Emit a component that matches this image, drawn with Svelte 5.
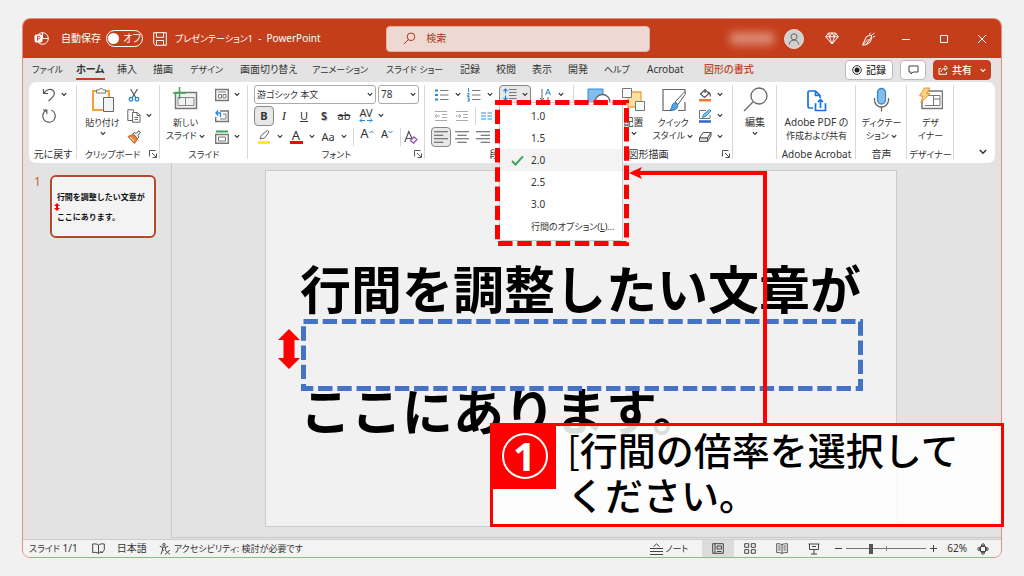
<script>
  const tabs = ['ファイル', 'ホーム', '挿入', '描画', 'デザイン', '画面切り替え', 'アニメーション', 'スライド ショー', '記録', '校閲', '表示', '開発', 'ヘルプ', 'Acrobat', '図形の書式'];
  const kanaTabs = ['ファイル', 'デザイン', 'アニメーション', 'スライド ショー', 'ヘルプ'];
  const spacings = ['1.0', '1.5', '2.0', '2.5', '3.0'];
  let active = $state('ホーム');
  let spacing = $state('2.0');
  let zoom = $state(30);
</script>

{#snippet chev()}
  <svg class="chev" width="6" height="5" viewBox="0 0 6 5"><path d="M0.8 1.2 3 3.4 5.2 1.2" fill="none" stroke="currentColor" stroke-width="1.2" /></svg>
{/snippet}

{#snippet launcher()}
  <button class="launcher" aria-label="詳細">
    <svg width="8" height="8" viewBox="0 0 8 8" fill="none" stroke="#555"><path d="M.5 6.500v-6h6M3 3l4 4M7.500 3.500v4h-4" /></svg>
  </button>
{/snippet}

{#snippet lines(rows)}
  <svg width="14" height="14" viewBox="0 0 12 12" stroke="#555"><path d={rows} /></svg>
{/snippet}

<div class="page">
  <div class="window">
    <header class="title">
      <div class="left">
        <svg width="15" height="15" viewBox="0 0 15 15" fill="none" stroke="#fff"><circle cx="8.500" cy="7.500" r="5.800" /><path d="M8.500 1.700v5.800h5.800" /><rect x="1" y="4" width="7" height="7" rx="1" fill="#fff" /><path d="M3.500 9.700V5.400h1.300a1.200 1.200 0 0 1 0 2.500H3.500" stroke="#c43e1c" /></svg>
        <span class="autosave" id="autosave">自動保存</span>
        <button class="toggle" role="switch" aria-checked="false" aria-labelledby="autosave"><i></i>オフ</button>
        <svg class="save" width="14" height="14" viewBox="0 0 14 14" fill="none" stroke="#fff"><path d="M.7 .7h12.600v12.600H2.500L.7 11.500zM3.500.7v4.600h7V.7M3.500 13V8.500h7V13" /></svg>
        <span><span class="kana">プレゼンテーション1</span>&nbsp; -&nbsp; PowerPoint</span>
      </div>
      <label class="search">
        <svg width="13" height="13" viewBox="0 0 13 13" fill="none" stroke="#a8381c"><circle cx="8" cy="4.800" r="3.800" /><path d="M5.300 7.600.8 12.200" /></svg>
        <input type="search" placeholder="検索" aria-label="検索" />
      </label>
      <div class="right">
        <span class="account"></span>
        <svg class="avatar" width="20" height="20" viewBox="0 0 20 20" fill="none" stroke="#666"><circle cx="10" cy="10" r="9.500" fill="#d2d0ce" stroke="#e6dcd9" /><circle cx="10" cy="7.800" r="3" /><path d="M5.200 15.500c.4-3 2.200-4.300 4.800-4.300s4.400 1.300 4.800 4.300" /></svg>
        <svg width="14" height="13" viewBox="0 0 14 13" fill="none" stroke="#fff"><path d="M3.500 1h7L13.300 4.800 7 12 .7 4.800zM.7 4.800h12.600M4.500 4.800 7 12l2.500-7.200L7 1 4.500 4.800 3.500 1M9.500 4.800l1-3.800" /></svg>
        <svg class="pen" width="15" height="14" viewBox="0 0 15 14" fill="none" stroke="#fff"><path d="M1.500 13 5.500 4.500l5-1.500v2L5 12.800zM5 12.800l4-2.500 2-5M1.500 13l6-6M8.500 2.500l.8-1.800M11.300 3 13.300.8M12 5l2-.7" /></svg>
        <button aria-label="最小化"><svg width="10" height="10" viewBox="0 0 10 10" stroke="#fff"><path d="M1 5.500h8" /></svg></button>
        <button aria-label="最大化"><svg width="10" height="10" viewBox="0 0 10 10" fill="none" stroke="#fff"><path d="M1.500 1.500h7v7h-7z" /></svg></button>
        <button aria-label="閉じる"><svg width="10" height="10" viewBox="0 0 10 10" stroke="#fff"><path d="m1 1 8 8M9 1 1 9" /></svg></button>
      </div>
    </header>

    <div class="tabbar">
      <nav>
        {#each tabs as tab}
          <button class="tab" class:kana={kanaTabs.includes(tab)} class:active={active === tab} class:context={tab === '図形の書式'} onclick={() => (active = tab)}>{tab}</button>
        {/each}
      </nav>
      <button class="pill rec"><svg width="10" height="10" viewBox="0 0 10 10"><circle cx="5" cy="5" r="4.300" fill="none" stroke="#333" /><circle cx="5" cy="5" r="2.500" fill="#222" /></svg>記録</button>
      <button class="pill note" aria-label="コメント"><svg width="11" height="10" viewBox="0 0 11 10" fill="none" stroke="#444"><path d="M1 1h9v6H5L3 9V7H1z" /></svg></button>
      <button class="pill share"><svg width="10" height="10" viewBox="0 0 10 10" fill="none" stroke="#fff"><path d="M3 3.500H1v5.800h7.500V7M3 7c.3-2.500 1.700-3.500 4-3.500V5.500L9.500 3 7 .8v1.500" /></svg>共有{@render chev()}</button>
    </div>

    <div class="ribbon">
      <section class="undo">
        <div class="body">
          <div class="stack">
            <div><svg width="14" height="14" viewBox="0 0 14 14" fill="none" stroke="#555" stroke-width="1.200"><path d="M1.500 1v4.500H6M1.700 5.300C4 2 8 .2 10.700 2.200c2.600 2 2 5-.4 7.200L6.500 13" /></svg>{@render chev()}</div>
            <div><svg width="14" height="14" viewBox="0 0 14 14" fill="none" stroke="#555" stroke-width="1.200"><path d="M1 1h3.800v4M4.500 1.300C2 2.500.8 4.500.8 7a6.200 6.200 0 1 0 8.500-5.700" /></svg></div>
          </div>
        </div>
        <footer>元に戻す</footer>
      </section>

      <section class="clip">
        <div class="body">
          <button class="big">
            <svg width="24" height="25" viewBox="0 0 24 25" fill="none"><path d="M2 4h16v19H2z" fill="#fbfbfb" stroke="#f0a23a" stroke-width="2" /><path d="M5.500 6V3H8a2.200 2.200 0 0 1 4.200 0h2.300v3z" fill="#fff" stroke="#777" /><path d="M12.500 10.500h10v14h-10z" fill="#f4f4f4" stroke="#666" /></svg>
            <span class="kana">貼り付け</span>{@render chev()}
          </button>
          <div class="stack">
            <div><svg width="14" height="14" viewBox="0 0 14 14" fill="none"><path d="M3.500 1 9 10M10.500 1 5 10" stroke="#555" stroke-width="1.200" /><circle cx="4" cy="11.300" r="1.800" stroke="#2b88d8" stroke-width="1.300" /><circle cx="10" cy="11.300" r="1.800" stroke="#2b88d8" stroke-width="1.300" /></svg></div>
            <div><svg width="14" height="14" viewBox="0 0 14 14" fill="none" stroke="#666"><path d="M5 11.500H.8V.8h5.700v2M5.500 3.500h5l2.500 2.700v7H5.500zM10 3.500v3h3M7.500 8.500h3.500M7.500 10.500h3.500" /></svg>{@render chev()}</div>
            <div><svg width="14" height="14" viewBox="0 0 14 14"><path d="M1 6.500 6 4.500l4.500 4.500-3 4.500z" fill="#f0843a" stroke="#c8641c" /><path d="m6 3.500 1.500-1 1.500 1L12 .8l1.300 1.400L11 5.500l1 1.500-1.500 1.500z" fill="#fff" stroke="#555" /><path d="m3 7 4 4" stroke="#fff" /></svg></div>
          </div>
        </div>
        <footer><span class="kana">クリップボード</span>{@render launcher()}</footer>
      </section>

      <section class="slides">
        <div class="body">
          <button class="big">
            <svg width="25" height="25" viewBox="0 0 25 25" fill="none"><path d="M2.500 5.500h21v16h-21z" fill="#f2f2f2" stroke="#777" stroke-width="1.500" /><path d="M5 10.500h16M5 18.500h16M5 10.500v8M21 10.500v8M12.500 10.500v8" stroke="#888" /><path d="M6.500 0v12M0 6h13" stroke="#3aa655" stroke-width="1.500" /></svg>
            <span class="kana">新しい<br />スライド {@render chev()}</span>
          </button>
          <div class="stack">
            <div><svg width="14" height="14" viewBox="0 0 14 14" fill="none" stroke="#777"><path d="M.7 1.500h12.600v11H.7z" stroke-width="1.400" /><path d="M3 4h8M3.500 6.500h3v3.500h-3zM8 6.500h3v3.500H8z" /></svg>{@render chev()}</div>
            <div><svg width="14" height="14" viewBox="0 0 14 14" fill="none" stroke="#777"><path d="M5 2h8.300v10.500H.7V8" stroke-width="1.400" /><path d="M5 10h6V5H8" /><path d="M1 4h4.500v4M3.200 1.500.8 4l2.400 2.500" stroke="#2b88d8" stroke-width="1.300" /></svg></div>
            <div><svg width="14" height="14" viewBox="0 0 14 14" fill="none" stroke="#777"><path d="M1 1.500h12" stroke="#3aa655" stroke-width="2" /><path d="M.7 4.500h12.600v8.800H.7z" stroke-width="1.400" /><path d="M3.500 7h7v4h-7z" /></svg>{@render chev()}</div>
          </div>
        </div>
        <footer><span class="kana">スライド</span></footer>
      </section>

      <section class="font">
        <div class="body rows">
          <div class="row combos">
            <span class="combo"><select class="kana" aria-label="フォント"><option>游ゴシック 本文</option></select>{@render chev()}</span>
            <span class="combo size"><select aria-label="フォント サイズ"><option>78</option></select>{@render chev()}</span>
          </div>
          <div class="row">
            <button class="cell on"><b>B</b></button>
            <button class="cell"><i class="serif">I</i></button>
            <button class="cell"><u>U</u></button>
            <button class="cell"><b class="shadow">S</b></button>
            <button class="cell"><s>ab</s></button>
            <button class="cell av">AV<svg width="14" height="5" viewBox="0 0 14 5" fill="none" stroke="#2b88d8"><path d="M.8 2.500h5.200M8 2.500h5.200M3 .5l-2 2 2 2M11 .5l2 2-2 2" /></svg></button>
            {@render chev()}
          </div>
          <div class="row third">
            <button class="cell" aria-label="蛍光ペン"><svg width="14" height="16" viewBox="0 0 14 16"><path d="M1 13.500h12" stroke="#ffef00" stroke-width="3" /><path d="m3 10 1.500-4 6-4.500 1.500 1.500-4.500 6z" fill="#fff" stroke="#666" /></svg></button>{@render chev()}
            <button class="cell color">A</button>{@render chev()}
            <button class="cell">Aa</button>{@render chev()}
            <hr />
            <button class="cell grow">A<svg width="5" height="4" viewBox="0 0 5 4" fill="none" stroke="#2b88d8"><path d="m.5 3 2-2 2 2" /></svg></button>
            <button class="cell grow small">A<svg width="5" height="4" viewBox="0 0 5 4" fill="none" stroke="#2b88d8"><path d="m.5 1 2 2 2-2" /></svg></button>
            <hr />
            <button class="clear" aria-label="書式のクリア"><svg width="14" height="14" viewBox="0 0 14 14" fill="none"><path d="m.8 12 4-10.500L9 11M2.200 8.500h5" stroke="#555" stroke-width="1.200" /><path d="m6.500 10.500 3.500-3.500 3 2.500-3.500 3.700z" fill="#fff" stroke="#a04fc0" stroke-width="1.300" /></svg></button>
          </div>
        </div>
        <footer><span class="kana">フォント</span>{@render launcher()}</footer>
      </section>

      <section class="para">
        <div class="body rows">
          <div class="row first">
            <svg width="14" height="14" viewBox="0 0 14 14"><path d="M0 2.500h3M0 7h3M0 11.500h3" stroke="#2b88d8" stroke-width="2" /><path d="M5 2.500h8.500M5 7h8.500M5 11.500h8.500" stroke="#777" /></svg>{@render chev()}
            <svg width="14" height="14" viewBox="0 0 14 14" fill="none"><path d="M1.500 0v4M.5 5.500h1.500v1.500H.7v1.500h1.800M.5 10h1.700v3.300H.5M.8 11.600h1.400" stroke="#2b88d8" /><path d="M5 2.500h8.500M5 7h8.500M5 11.500h8.500" stroke="#777" /></svg>{@render chev()}
            <div class="spacing">
              <button class="on" aria-label="行間"><svg width="14" height="13" viewBox="0 0 14 13" fill="none"><path d="M2.500 1v4.500M.5 3l2-2 2 2M2.500 12V7.500M.5 10l2 2 2-2" stroke="#2b88d8" stroke-width="1.200" /><path d="M6 1.500h7.500M6 4.500h7.500M6 7.500h7.500M6 10.500h7.500" stroke="#777" /></svg>{@render chev()}</button>
              <div class="menu">
                {#each spacings as value}
                  <button class:picked={spacing === value} onclick={() => (spacing = value)}>
                    {#if spacing === value}<svg width="13" height="11" viewBox="0 0 13 11" fill="none"><path d="m1 6 3.500 3.500L12 1.300" stroke="#3aa655" stroke-width="2" /></svg>{:else}<i></i>{/if}<span>{value}</span>
                  </button>
                {/each}
                <button><i></i><span class="kana">行間のオプション(<u>L</u>)...</span></button>
              </div>
            </div>
            <svg class="dir" width="13" height="14" viewBox="0 0 13 14" fill="none"><path d="M2 1v11M0 10l2 2.500L4 10" stroke="#666" /><path d="m5.500 7 2.500-6 2.500 6M6.300 5h3.500" stroke="#2b88d8" /><path d="M8 9v4" stroke="#666" /></svg>{@render chev()}
          </div>
          <div class="row indent">
            <svg width="12" height="12" viewBox="0 0 12 12" fill="none" stroke="#aaa"><path d="M0 1.500h12M7 4.500h5M7 7.500h5M0 10.500h12M0 6h5M2 4.200 0 6l2 1.800" /></svg>
            <svg width="12" height="12" viewBox="0 0 12 12" fill="none" stroke="#aaa"><path d="M0 1.500h12M7 4.500h5M7 7.500h5M0 10.500h12M0 6h5M3 4.200 5 6 3 7.800" /></svg>
            <hr />
            <svg width="11" height="10" viewBox="0 0 11 10" stroke="#2b88d8"><path d="M0 2h5M0 5h5M0 8h5M6.500 2h4.500M6.500 5h4.500M6.500 8h4.500" /></svg>{@render chev()}
          </div>
          <div class="row align">
            <button class="cell on" aria-label="左揃え">{@render lines('M0 1.500h12M0 4.500h8M0 7.500h12M0 10.500h8')}</button>
            <button class="cell" aria-label="中央揃え">{@render lines('M0 1.500h12M2 4.500h8M0 7.500h12M2 10.500h8')}</button>
            <button class="cell" aria-label="右揃え">{@render lines('M0 1.500h12M4 4.500h8M0 7.500h12M4 10.500h8')}</button>
            <button class="cell" aria-label="両端揃え">{@render lines('M0 1.500h12M0 4.500h12M0 7.500h12M0 10.500h12')}</button>
          </div>
        </div>
        <footer class="under">段落</footer>
      </section>

      <section class="draw">
        <div class="body">
          <button class="big" aria-label="図形"><svg width="25" height="25" viewBox="0 0 25 25"><path d="M1 2h15v14H1z" fill="#83beec" stroke="#2b88d8" /><circle cx="15.500" cy="15" r="7.500" fill="#fff" stroke="#666" stroke-width="1.300" /></svg></button>
          <button class="big"><svg width="25" height="25" viewBox="0 0 25 25"><path d="M7 5h13v15H7z" fill="#fbe0a0" stroke="#eba43c" stroke-width="1.300" /><path d="M1.500 1.500h9v9h-9zM14.500 14.500h9v9h-9z" fill="#fafafa" stroke="#777" /></svg><span>配置</span>{@render chev()}</button>
          <button class="big quick"><svg width="25" height="25" viewBox="0 0 25 25" fill="none"><path d="M24 6V2.500H2v21h9M24 15v8.500h-7" stroke="#666" stroke-width="1.200" /><path d="m14 15 8-8.500c2-2 3.500-1.500 2 1l-7 10z" fill="#fff" stroke="#555" /><path d="M9 23c2-1 1.500-3 2.500-5.500 1-2.500 5-2 5.300 1C17 22 13 24 9 23z" fill="#5aa5e0" stroke="#2170b8" /></svg><span class="kana">クイック<br />スタイル {@render chev()}</span></button>
          <div class="stack">
            <div><svg width="14" height="14" viewBox="0 0 14 14" fill="none"><path d="M1 12.300h12" stroke="#ed7d31" stroke-width="2.500" /><path d="m2.500 6 4.500-4.500 4 4-4.500 4zM7 1.500V5M10.500 4c1.500.5 2 2 1.800 4.500" stroke="#555" stroke-width="1.200" /></svg>{@render chev()}</div>
            <div><svg width="14" height="14" viewBox="0 0 14 14" fill="none"><path d="M1 12.500h12" stroke="#2f66c5" stroke-width="2.500" /><path d="M8 1.500H1.500v8H12V6" stroke="#777" /><path d="m4.500 8.500 1-3 6-5 1.500 1.500-5.500 5.500z" fill="#83beec" stroke="#2b88d8" /></svg>{@render chev()}</div>
            <div><svg width="14" height="14" viewBox="0 0 14 14" fill="#ddd" stroke="#555"><path d="M1.500 8 5 2.500h8L9.500 8z" fill="#fff" /><path d="M1.500 8h8v3.500h-8zM9.500 8 13 2.500V6l-3.500 5.500z" /></svg>{@render chev()}</div>
          </div>
        </div>
        <footer>図形描画{@render launcher()}</footer>
      </section>

      <section>
        <div class="body"><button class="big"><svg width="25" height="25" viewBox="0 0 25 25" fill="#fafafa" stroke="#666" stroke-width="1.300"><circle cx="16" cy="9" r="8" /><path d="M10 15 1 24" /></svg><span>編集</span>{@render chev()}</button></div>
      </section>

      <section>
        <div class="body"><button class="big"><svg width="25" height="25" viewBox="0 0 25 25" fill="none" stroke="#1473e6" stroke-width="1.700"><path d="M9 21H5.500a1.500 1.500 0 0 1-1.500-1.500v-14A1.500 1.500 0 0 1 5.500 4h6L16 8.500V11M11.500 4v4.500H16M12.500 17h-1v6.500h10V17h-1M16.500 21v-8.500M14 15l2.500-2.500L19 15" /></svg><span class="pdf">Adobe PDF の<br /><span class="kana">作成および共有</span></span></button></div>
        <footer>Adobe Acrobat</footer>
      </section>

      <section>
        <div class="body"><button class="big"><svg width="25" height="25" viewBox="0 0 25 25" fill="none" stroke="#666" stroke-width="1.300"><path d="M5.500 11v2a7 7 0 0 0 14 0v-2M12.500 20v4.500" /><rect x="8.500" y="1.500" width="8" height="15.500" rx="4" fill="#83beec" stroke="#3a86c8" /></svg><span class="kana">ディクテー<br />ション {@render chev()}</span></button></div>
        <footer>音声</footer>
      </section>

      <section>
        <div class="body"><button class="big"><svg width="25" height="25" viewBox="0 0 25 25" fill="none" stroke="#777"><path d="M8 4h16.500v17.500H4V13" stroke-width="1.500" /><path d="M9 8.500h13M7 18.500h8.500V8.500M15.500 12H22v-3.500M22 12v6.500h-6.500" /><path d="M6.500 1H12L8.500 6.500H12L3 15.500l2-6.500H1.500z" fill="#fbd38a" stroke="#f08c1e" /></svg><span class="kana">デザ<br />イナー</span></button></div>
        <footer><span class="kana">デザイナー</span></footer>
      </section>

      <div class="collapse"><button aria-label="リボンを折りたたむ"><svg width="8" height="6" viewBox="0 0 8 6" fill="none" stroke="#333" stroke-width="1.500"><path d="m.8 1 3.200 3.200L7.200 1" /></svg></button></div>
    </div>

    <main>
      <aside>
        <span>1</span>
        <div class="thumb">行間を調整したい文章が<br />ここにあります。<svg width="6" height="8" viewBox="0 0 6 8"><path d="m3 0 3 3H4v2h2L3 8 0 5h2V3H0z" fill="red" /></svg></div>
      </aside>
      <div class="canvas">
        <div class="slide">
          <p>行間を調整したい文章が<br />ここにあります。</p>
          <svg class="updown" width="22" height="40" viewBox="0 0 22 40"><path d="m11 0 11 11h-5.500v18H22L11 40 0 29h5.500V11H0z" fill="red" /></svg>
          <svg class="gapbox" width="562" height="72" viewBox="0 0 562 72"><path d="M2.500 2.500h557v67H2.500z" fill="none" stroke="#4472c4" stroke-width="5" stroke-dasharray="14.400 4.800" /></svg>
        </div>
      </div>
    </main>

    <div class="status">
      <span><span class="kana">スライド</span> 1/1</span>
      <svg class="book" width="13" height="11" viewBox="0 0 13 11" fill="none" stroke="#444"><path d="M6.500 2C5 .8 3 .7.7 1v8.500c2.300-.3 4.300-.2 5.800 1 1.500-1.200 2-1.300 3.500-1.300M6.500 2C8 .8 10 .7 12.300 1v5.500M6.500 2v8.500M8.500 8l1.500 2 2.500-3.500" /></svg>
      <span>日本語</span>
      <svg class="acc" width="12" height="12" viewBox="0 0 12 12" fill="none" stroke="#444"><circle cx="5" cy="1.700" r="1.200" /><path d="M.8 3.300c2.500 1.300 6 1.300 8.400 0M3.500 4.500v2.500L2 11.300M6.500 4.500v2M3.800 8 5 6.500M6 7l5 4.500M11 7l-5 4.500" /></svg>
      <span class="kana">アクセシビリティ: 検討が必要です</span>
      <button class="notes kana"><svg width="13" height="12" viewBox="0 0 13 12" fill="none" stroke="#444"><path d="M3.500 3.500 6.500 1l3 2.500M0 5.500h13M0 8.500h13M0 11.500h13" /></svg>ノート</button>
      <button class="view on" aria-label="標準"><svg width="12" height="11" viewBox="0 0 12 11" fill="none" stroke="#444"><path d="M.7.700h10.600v9.600H.7zM3 .7v9.600M5 3h4.500v3H5zM5 8.500h4.500" /></svg></button>
      <button class="view" aria-label="一覧"><svg width="12" height="11" viewBox="0 0 12 11" fill="none" stroke="#444"><path d="M.7.700h4v3.600h-4zM7.300.7h4v3.600h-4zM.7 6.700h4v3.600h-4zM7.300 6.700h4v3.600h-4z" /></svg></button>
      <button class="view" aria-label="閲覧"><svg width="12" height="11" viewBox="0 0 12 11" fill="none" stroke="#555"><path d="M6 1.700C4.500.7 3 .7.700.7v8.800c2.300 0 3.800 0 5.300 1 1.500-1 3-1 5.300-1V.7C9 .7 7.500.7 6 1.700zv8.800M2.200 3h2.300M2.200 5h2.300M2.200 7h2.300M7.500 3h2.300M7.500 5h2.300M7.500 7h2.300" /></svg></button>
      <button class="view" aria-label="スライド ショー"><svg width="12" height="12" viewBox="0 0 12 12" fill="none" stroke="#444"><path d="M.5 1h11M1.500 1v5.500h9V1M4 3.500h4M6 6.500v4.500M3 11h6" /></svg></button>
      <div class="zoom">
        <button aria-label="縮小"><svg width="7" height="7" viewBox="0 0 7 7" stroke="#444"><path d="M0 3.500h7" /></svg></button>
        <input type="range" min="0" max="100" bind:value={zoom} aria-label="ズーム" />
        <button aria-label="拡大"><svg width="7" height="7" viewBox="0 0 7 7" stroke="#444"><path d="M0 3.500h7M3.500 0v7" /></svg></button>
      </div>
      <span class="pct">62%</span>
      <svg width="12" height="12" viewBox="0 0 12 12" fill="none" stroke="#444"><path d="M3.500 3.500h5v5h-5zM4 2.300 6 .5l2 1.800zM4 9.700l2 1.800 2-1.800zM2.300 4 .5 6l1.800 2zM9.700 4l1.800 2-1.800 2z" /></svg>
    </div>
  </div>

  <svg class="frame" width="134" height="146" viewBox="0 0 134 146"><path d="M2.500 2.500h129v141H2.500z" fill="none" stroke="red" stroke-width="5" stroke-dasharray="14.400 4.800" /></svg>
  <svg class="link" width="140" height="256" viewBox="0 0 140 256"><path d="M6 6h130v250" fill="none" stroke="red" stroke-width="4" /><path d="M0 6 13 0 10 6l3 6z" fill="red" /></svg>
  <div class="callout">
    <div class="badge"><span>1</span></div>
    <p><span>[</span>行間の倍率を選択して<br />ください。</p>
  </div>
</div>

<style>
  :global(body) { background: #f1f1f1; }
  .page, .page * { box-sizing: border-box; }
  .page {
    position: relative;
    min-height: 100vh;
    padding: 18px 22px;
    font: 10px/13px "Noto Sans", "Noto Sans CJK JP", sans-serif;
    font-feature-settings: "palt";
    color: #333;
    white-space: nowrap;
  }
  button, input, select { font: inherit; font-feature-settings: inherit; color: inherit; background: none; border: 0; padding: 0; margin: 0; }
  button { display: flex; align-items: center; justify-content: center; }
  svg { display: block; flex: none; }
  .kana { font-size: 9px; }
  .window { background: #e3e3e3; border: 1px solid #e0917f; border-radius: 8px; overflow: hidden; }

  .title { display: grid; grid-template-columns: 364fr 264fr 352fr; align-items: center; height: 39px; background: #c43e1c; color: #fff; }
  .left, .right { display: flex; align-items: center; }
  .left { padding-left: 11px; }
  .autosave { margin: 0 5px 0 12px; }
  .toggle { width: 37px; height: 17px; border: 1px solid #fff; border-radius: 9px; gap: 4px; }
  .toggle i { width: 11px; height: 11px; border-radius: 50%; background: #fff; }
  .save { margin: 0 8px 0 10px; }
  .search { display: flex; align-items: center; height: 26px; padding-left: 16px; gap: 10px; border-radius: 4px; background: #eed8d2; border: 1px solid #e5b3a6; }
  .search input { flex: 1; min-width: 0; color: #a8381c; outline: 0; }
  .search input::placeholder { color: #a8381c; opacity: 1; }
  .right { justify-content: flex-end; padding-right: 14px; }
  .right button { width: 11px; margin-left: 27px; }
  .account { width: 44px; height: 13px; margin-right: 10px; background: #dd8871; filter: blur(4px); }
  .avatar { margin-right: 21px; }
  .pen { margin-left: 22px; margin-right: -3px; }

  .tabbar { display: flex; align-items: center; height: 24px; padding: 0 10px 0 9px; gap: 7px; }
  nav { display: grid; flex: 1; align-self: flex-end; grid-template-columns: 44px 41px 36px 37px 50px 72px 74px 74px 36px 36px 36px 36px 43px 57px 1fr; }
  .tab { justify-self: start; height: 21px; padding-top: 1px; margin-bottom: 2px; border-bottom: 2px solid transparent; }
  .tab.active { font-weight: 700; border-color: #c43e1c; }
  .tab.context { color: #b7472a; font-weight: 500; }
  .pill { height: 20px; background: #fff; border: 1px solid #bbb; border-radius: 4px; gap: 4px; }
  .rec { width: 48px; font-weight: 500; }
  .note { width: 26px; }
  .share { width: 58px; background: #c43e1c; border-color: #c43e1c; color: #fff; font-weight: 500; }
  .share .chev { margin-left: 4px; }

  .ribbon { display: grid; grid-template-columns: 48px 83px 88px 177px 149px 159px 44px 79px 51px 47px 1fr; height: 81px; margin: 0 6px; background: #fff; border-radius: 7px; }
  section { position: relative; display: flex; flex-direction: column; padding: 2px 0; }
  section::after { content: ""; position: absolute; right: 0; top: 3px; bottom: 4px; border-right: 1px solid #d8d8d8; }
  .body { display: flex; justify-content: center; height: 63px; }
  footer { position: relative; height: 14px; line-height: 14px; text-align: center; }
  .launcher { position: absolute; right: 3px; top: 3px; }
  .clip footer { padding-right: 12px; }
  .draw footer { padding-right: 10px; }
  .stack > div { display: flex; align-items: center; height: 21px; gap: 5px; }
  .undo .stack { padding-left: 2px; }
  .big { flex-direction: column; justify-content: flex-start; padding-top: 3px; line-height: 13px; }
  .big span { margin-top: 4px; }
  .big > .chev { margin-top: 2px; }
  .big span .chev { display: inline-block; vertical-align: middle; }
  .clip .body { gap: 7px; }
  .slides .body { gap: 10px; padding-right: 2px; }
  .rows { flex-direction: column; justify-content: flex-start; padding-left: 6px; }
  .row { display: flex; align-items: center; height: 21px; }
  .combos { gap: 2px; }
  .combo { position: relative; width: 122px; height: 19px; border: 1px solid #aaa; border-radius: 3px; display: flex; align-items: center; }
  .combo.size { width: 41px; }
  .combo select { appearance: none; width: 100%; padding-left: 2px; outline: 0; }
  .combo .chev { position: absolute; right: 2px; }
  .cell { width: 20px; height: 20px; font-size: 11px; flex: none; }
  .on { background: #e8e8e8; border: 1px solid #888; border-radius: 4px; }
  .serif { font-family: "Liberation Serif", serif; font-size: 13px; }
  .shadow { text-shadow: 1px 1px 1px #bbb; }
  .cell.av { flex-direction: column; width: 24px; line-height: 10px; }
  .third .chev { margin: 0 3px; }
  .cell.color { flex-direction: column; font-size: 13px; line-height: 12px; }
  .color::after { content: ""; width: 13px; height: 3px; background: red; }
  hr { width: 1px; height: 18px; border: 0; background: #d8d8d8; margin: 0 3px; }
  .grow { font-size: 13px; align-items: flex-start; }
  .grow svg { margin-top: 3px; }
  .grow.small { font-size: 11px; }

  .first { padding-left: 4px; }
  .first > .chev { margin: 0 6px; }
  .first > .chev:last-child { margin: 0 0 0 5px; }
  .spacing { position: relative; }
  .spacing > .on { width: 32px; height: 19px; gap: 5px; }
  .dir { margin-left: 9px; }
  .menu { position: absolute; z-index: 2; top: 17px; left: 0; width: 124px; padding: 2px 0 3px; background: #fff; border: 1px solid #ccc; border-radius: 3px; }
  .menu button { width: 100%; height: 22px; justify-content: flex-start; gap: 7px; padding-left: 11px; }
  .menu i { width: 13px; }
  .menu .picked { background: #f3f3f3; }
  .indent { gap: 9px; padding-left: 4px; }
  .indent hr { margin: 0 -4px 0 -2px; }
  .indent .chev { margin-left: -4px; }
  .align { gap: 1px; }
  .draw .body { justify-content: flex-start; gap: 9px; padding-left: 13px; }
  .draw .big { width: 25px; }
  .draw .quick { width: 36px; }
  .quick + .stack { margin-left: -2px; }
  .collapse { display: flex; align-items: flex-end; justify-content: flex-end; padding: 0 8px 8px 0; }

  main { display: grid; grid-template-columns: 149px 1fr; }
  aside { display: flex; gap: 9px; padding: 12px 0 0 11px; border-right: 1px solid #c8c8c8; color: #d8593b; font-size: 12px; }
  .thumb { position: relative; width: 106px; height: 63px; padding: 10px 5px; border: 2px solid #b7472a; border-radius: 6px; background: #f3f3f3; box-shadow: inset 0 0 0 1px #fff; color: #111; font: 700 8px/20px "Noto Sans CJK JP", sans-serif; font-feature-settings: normal; }
  .thumb svg { position: absolute; left: 2px; top: 26px; }
  .canvas { display: flex; justify-content: center; padding: 7px 11px 10px 0; border-bottom: 1px solid #c8c8c8; }
  .slide { position: relative; width: 632px; height: 357px; background: #f1f1f1; border: 1px solid #ccc; }
  .slide p { margin: 0; padding: 55px 0 0 34px; color: #000; font: 700 51px/122px "Noto Sans CJK JP", sans-serif; font-feature-settings: normal; }
  .updown { position: absolute; left: 12px; top: 158px; }
  .gapbox { position: absolute; left: 35px; top: 148px; }

  .status { display: flex; align-items: center; height: 18px; margin-top: 1px; padding: 0 12px 0 6px; background: #f3f3f3; border-top: 1px solid #ccc; }
  .book { margin: 0 12px 0 14px; }
  .acc { margin: 0 3px 0 12px; }
  .notes { margin-left: auto; margin-right: 14px; gap: 2px; }
  .view { width: 32px; height: 17px; }
  .view.on { background: #dcdcdc; border: 0; border-radius: 0; }
  .zoom { display: flex; align-items: center; gap: 4px; margin: 0 10px 0 5px; }
  .zoom input { appearance: none; width: 80px; height: 12px; background: linear-gradient(#888, #888) 50% 50% / 1px 5px no-repeat, linear-gradient(#777, #777) 0 50% / 100% 1px no-repeat; }
  .zoom input::-webkit-slider-thumb { appearance: none; width: 4px; height: 10px; background: #555; }
  .pct { margin-right: 10px; }

  .frame { position: absolute; left: 495px; top: 100px; z-index: 3; }
  .link { position: absolute; left: 629px; top: 167px; z-index: 3; }
  .callout { position: absolute; z-index: 4; left: 490px; top: 423px; width: 514px; height: 104px; display: flex; border: 3px solid red; background: #ffffffdd; color: #000; }
  .badge { display: flex; align-items: center; justify-content: center; width: 63px; height: 63px; padding-bottom: 4px; background: red; }
  .badge span { width: 46px; height: 46px; border: 2px solid #fff; border-radius: 50%; color: #fff; font: 700 40px/41px "Open Sans", sans-serif; text-align: center; }
  .callout p { margin: 0; font: 500 38px/45px "Noto Sans CJK JP", sans-serif; padding: 0 0 0 11px; font-feature-settings: normal; }
  .callout p span { font-weight: 400; }
</style>
